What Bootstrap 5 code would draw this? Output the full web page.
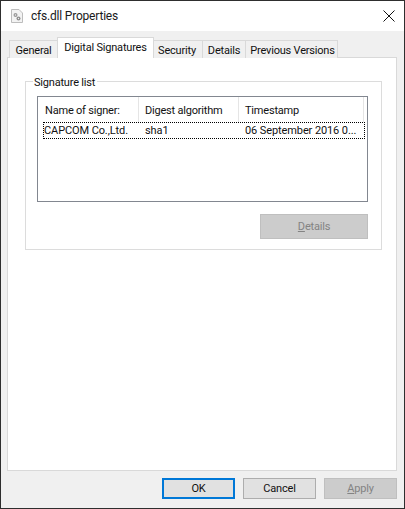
<!DOCTYPE html>
<html lang="en">
<head>
<meta charset="utf-8">
<title>cfs.dll Properties</title>
<link href="https://cdn.jsdelivr.net/npm/bootstrap@5.3.0/dist/css/bootstrap.min.css" rel="stylesheet">
<style>
html,body{margin:0;padding:0;background:#f0f0f0;}
body{font-family:Roboto,"Liberation Sans",sans-serif;font-size:11px;letter-spacing:-.2px;line-height:16px;color:#111;width:405px;height:509px;overflow:hidden;}
.dlg{width:405px;height:509px;border:1px solid #2e2e2e;background:#f0f0f0;}
.ttl{height:30px;background:#fff;padding-left:10px;}
.ttl-text{font-size:12px;margin-left:8px;color:#1a1a1a;}
.ttl-x{margin-left:auto;margin-right:9px;}
.pane-wrap{padding:6px 7px 0 6px;}
.tabstrip{height:21px;padding-left:2px;border:0;flex-wrap:nowrap;}
.tabitem{height:18px;margin-top:3px;text-align:center;background:#f0f0f0;border:1px solid #d9d9d9;border-bottom:0;margin-right:-1px;white-space:nowrap;line-height:19px;}
.tabitem.tabon{height:21px;margin-top:0;background:#fff;position:relative;z-index:2;line-height:19px;}
.t1{width:49px;}.t2{width:97px;}.t3{width:50px;padding-right:2px;}.t4{width:44px;}.t5{width:93px;padding-left:2px;}
.tabpane{height:414px;background:#fff;border:1px solid #d9d9d9;margin-top:-1px;padding:23px 14px 0 17px;}
.grpbox{position:relative;height:169px;border:1px solid #dcdcdc;padding:14px 14px 0 11px;}
.grplegend{position:absolute;left:7px;top:-7px;background:#fff;padding:0 2px 0 1px;line-height:15px;}
.sigbox{height:106px;border:1px solid #828790;width:331px;}
.sighead{height:25px;line-height:28px;}
.sigcell{border-right:1px solid #e5e5e5;padding-left:6px;height:25px;white-space:nowrap;overflow:hidden;}
.c1{width:101px;padding-left:7px;}.c2{width:100px;}.c3{width:125px;}
.sigrow{height:17px;margin:0 2px 0 5px;border:1px dotted #000;line-height:15px;white-space:nowrap;letter-spacing:-.1px;}
.sigcol1{width:101px;}.sigcol2{width:100px;}
.actions{padding-top:12px;width:331px;}
.winbtn{display:block;border-radius:0;padding:0;font-size:11px;letter-spacing:-.2px;color:#111;line-height:17px;background:#e1e1e1;border:1px solid #adadad;width:73px;height:21px;}
.winbtn.btn-ok{border:2px solid #0078d7;line-height:16px;}
.winbtn.btn-off,.winbtn.btn-off:disabled{background:#ccc;border-color:#bfbfbf;color:#838383;opacity:1;}
.wide{width:108px;height:25px;line-height:22px;}
.foot{padding:7px 0 0 0;gap:8px;}
.acc{text-decoration:underline;}
</style>
</head>
<body>
<div class="dlg d-flex flex-column">
  <div class="ttl d-flex align-items-center">
    <svg width="12" height="14" viewBox="0 0 12 14" aria-hidden="true"><path d="M.5.5h7.500l3.500 3.500v9.500h-11z" fill="#f3f3f3" stroke="#bdbdbd"/><circle cx="4.500" cy="6" r="2" fill="#9a9a9a"/><circle cx="7.500" cy="9.500" r="2" fill="#8d8d8d"/><circle cx="4.500" cy="6" r=".7" fill="#eee"/><circle cx="7.500" cy="9.500" r=".7" fill="#eee"/></svg>
    <span class="ttl-text">cfs.dll Properties</span>
    <svg class="ttl-x" width="12" height="12" viewBox="0 0 12 12" aria-hidden="true"><path d="M.5.5l11 11M11.500.5l-11 11" stroke="#111" stroke-width="1" fill="none"/></svg>
  </div>
  <div class="pane-wrap">
    <div class="tabstrip nav">
      <div class="tabitem t1">General</div>
      <div class="tabitem tabon t2">Digital Signatures</div>
      <div class="tabitem t3">Security</div>
      <div class="tabitem t4">Details</div>
      <div class="tabitem t5">Previous Versions</div>
    </div>
    <div class="tabpane">
      <div class="grpbox">
        <div class="grplegend">Signature list</div>
        <div class="sigbox">
          <div class="sighead d-flex">
            <div class="sigcell c1">Name of signer:</div>
            <div class="sigcell c2">Digest algorithm</div>
            <div class="sigcell c3">Timestamp</div>
          </div>
          <div class="sigrow d-flex">
            <div class="sigcol1">CAPCOM Co.,Ltd.</div>
            <div class="sigcol2">sha1</div>
            <div>06 September 2016 0...</div>
          </div>
        </div>
        <div class="actions d-flex justify-content-end">
          <button class="btn winbtn wide btn-off" disabled><span class="acc">D</span>etails</button>
        </div>
      </div>
    </div>
    <div class="foot d-flex justify-content-end">
      <button class="btn winbtn btn-ok">OK</button>
      <button class="btn winbtn">Cancel</button>
      <button class="btn winbtn btn-off" disabled><span class="acc">A</span>pply</button>
    </div>
  </div>
</div>
<script src="https://cdn.jsdelivr.net/npm/bootstrap@5.3.0/dist/js/bootstrap.bundle.min.js"></script>
</body>
</html>
